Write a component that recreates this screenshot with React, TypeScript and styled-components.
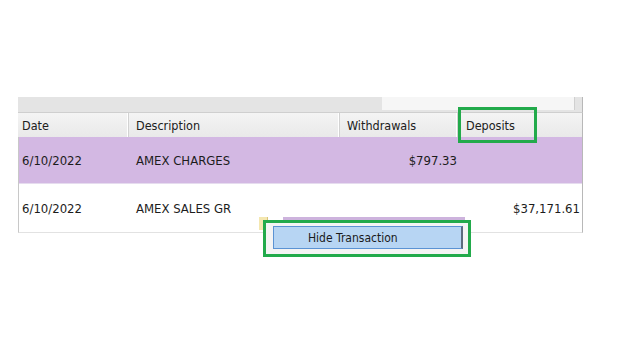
import { createGlobalStyle, styled } from 'styled-components';

interface Txn {
  date: string;
  description: string;
  withdrawal?: string;
  deposit?: string;
  highlighted?: boolean;
}

const rows: Txn[] = [
  { date: '6/10/2022', description: 'AMEX CHARGES', withdrawal: '$797.33', highlighted: true },
  { date: '6/10/2022', description: 'AMEX SALES GR', deposit: '$37,171.61' },
];

const cols = '111px 211px 118px 125px';

const GlobalStyle = createGlobalStyle`
  html, body {
    margin: 0;
    padding: 0;
    background: #ffffff;
  }
  body {
    font-family: Tahoma, "DejaVu Sans Condensed", "Liberation Sans", sans-serif;
    font-size: 12px;
    color: #1a1a1a;
  }
`;

const Page = styled.div`
  width: 640px;
  height: 360px;
  padding: 97px 0 0 18px;
  box-sizing: border-box;
  position: relative;
  overflow: hidden;
`;

const Register = styled.div`
  width: 565px;
  position: relative;
`;

const TopStrip = styled.div`
  height: 15px;
  background: #e4e4e4;
  border-right: 1px solid #b8b8b8;
  display: flex;
  justify-content: flex-end;
  padding-right: 7px;
`;

const StripPanel = styled.div`
  width: 192px;
  height: 13px;
  background: #f6f6f6;
  border-right: 1px solid #d0d0d0;
`;

const HeaderRow = styled.div`
  display: grid;
  grid-template-columns: ${cols};
  height: 25px;
  background: linear-gradient(#f4f4f4, #e9e9e9);
  border-top: 1px solid #cfcfcf;
  border-right: 1px solid #b8b8b8;
  box-sizing: border-box;
`;

const HeaderCell = styled.div`
  display: flex;
  align-items: center;
  padding-left: 7px;
  border-right: 1px solid #d2d2d2;
  box-shadow: inset -1px 0 0 #ffffff;
  font-size: 12.5px;
  color: #202020;
  &:first-child {
    padding-left: 4px;
  }
  &:last-child {
    padding-left: 8px;
    border-right: none;
    box-shadow: none;
  }
`;

const Body = styled.div`
  border-left: 1px solid #c8c8c8;
  border-right: 1px solid #b8b8b8;
  border-bottom: 1px solid #e2e2e2;
`;

const Row = styled.div<{ $highlighted?: boolean }>`
  display: grid;
  grid-template-columns: ${cols};
  height: ${(p) => (p.$highlighted ? '47px' : '48px')};
  background: ${(p) => (p.$highlighted ? '#d3b8e3' : '#ffffff')};
  border-bottom: ${(p) => (p.$highlighted ? '1px solid #e6dcef' : 'none')};
  box-sizing: border-box;
`;

const Cell = styled.div<{ $amount?: boolean }>`
  display: flex;
  align-items: center;
  justify-content: ${(p) => (p.$amount ? 'flex-end' : 'flex-start')};
  padding: ${(p) => (p.$amount ? '0 2px 0 0' : '0 0 0 6px')};
  font-size: 13px;
  color: #1c1c1c;
  &:first-child {
    padding-left: 3px;
  }
  &:last-child {
    padding-right: 4px;
  }
`;

const Callout = styled.div`
  position: absolute;
  border: 3px solid #22aa4b;
  box-sizing: border-box;
  pointer-events: none;
`;

const HeaderCallout = styled(Callout)`
  left: 440px;
  top: 10px;
  width: 79px;
  height: 36px;
`;

const Menu = styled.div`
  position: absolute;
  left: 263px;
  top: 220px;
  width: 208px;
  height: 37px;
  border: 3px solid #22aa4b;
  box-sizing: border-box;
  background: #f4f4f4;
  padding: 3px 5px 5px 7px;
  display: flex;
  align-items: stretch;
`;

const MenuBackdrop = styled.div`
  position: absolute;
  left: 283px;
  top: 217px;
  width: 182px;
  height: 4px;
  background: #cdb3dd;
`;

const MenuIcon = styled.div`
  position: absolute;
  left: 259px;
  top: 217px;
  width: 8px;
  height: 13px;
  background: #f4e7b0;
  border-right: 1px solid #d8c47a;
`;

const MenuItem = styled.div`
  flex: 1;
  display: flex;
  align-items: center;
  justify-content: flex-start;
  padding-left: 34px;
  background: #b7d5f3;
  border: 1px solid #5b93d4;
  border-right: 2px solid #5c6b7e;
  font-size: 12px;
  color: #1a1a1a;
`;

export default function App() {
  return (
    <>
      <GlobalStyle />
      <Page>
        <Register>
          <TopStrip>
            <StripPanel />
          </TopStrip>
          <HeaderRow>
            <HeaderCell>Date</HeaderCell>
            <HeaderCell>Description</HeaderCell>
            <HeaderCell>Withdrawals</HeaderCell>
            <HeaderCell>Deposits</HeaderCell>
          </HeaderRow>
          <Body>
            {rows.map((r, i) => (
              <Row key={i} $highlighted={r.highlighted}>
                <Cell>{r.date}</Cell>
                <Cell>{r.description}</Cell>
                <Cell $amount>{r.withdrawal}</Cell>
                <Cell $amount>{r.deposit}</Cell>
              </Row>
            ))}
          </Body>
          <HeaderCallout />
        </Register>
        <MenuIcon />
        <MenuBackdrop />
        <Menu>
          <MenuItem>Hide Transaction</MenuItem>
        </Menu>
      </Page>
    </>
  );
}
